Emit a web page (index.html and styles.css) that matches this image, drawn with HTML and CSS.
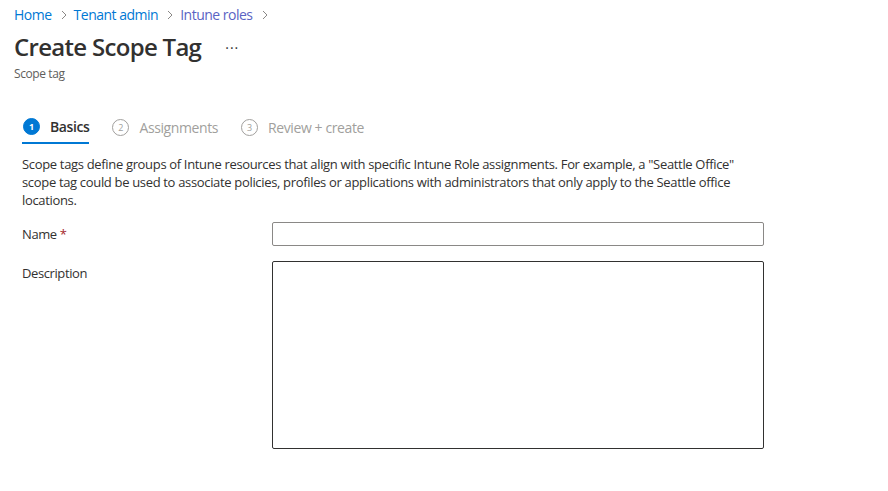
FILE: index.html
```html
<!DOCTYPE html>
<html lang="en">
<head>
    <meta charset="UTF-8">
    <meta name="viewport" content="width=device-width, initial-scale=1.0">
    <title>Create Scope Tag</title>
    <link rel="stylesheet" href="styles.css">
</head>
<body>
    <header class="page-header">
        <nav class="breadcrumb">
            <a href="#" class="crumb">Home</a>
            <svg class="sep" width="6" height="10" viewBox="0 0 6 10"><path d="M1 1l4 4-4 4" fill="none" stroke="#8a8886" stroke-width="1"/></svg>
            <a href="#" class="crumb">Tenant admin</a>
            <svg class="sep" width="6" height="10" viewBox="0 0 6 10"><path d="M1 1l4 4-4 4" fill="none" stroke="#8a8886" stroke-width="1"/></svg>
            <a href="#" class="crumb visited">Intune roles</a>
            <svg class="sep" width="6" height="10" viewBox="0 0 6 10"><path d="M1 1l4 4-4 4" fill="none" stroke="#8a8886" stroke-width="1"/></svg>
        </nav>
        <div class="title-row">
            <h1>Create Scope Tag</h1>
            <span class="more">&middot;&middot;&middot;</span>
        </div>
        <p class="subtitle">Scope tag</p>
    </header>

    <main class="content">
        <ul class="steps">
            <li class="step active"><span class="num">1</span>Basics</li>
            <li class="step"><span class="num">2</span>Assignments</li>
            <li class="step"><span class="num">3</span>Review + create</li>
        </ul>

        <p class="intro">Scope tags define groups of Intune resources that align with specific Intune Role assignments. For example, a "Seattle Office" scope tag could be used to associate policies, profiles or applications with administrators that only apply to the Seattle office locations.</p>

        <form class="form">
            <div class="field">
                <label for="name">Name <span class="req">*</span></label>
                <input type="text" id="name" class="input">
            </div>
            <div class="field">
                <label for="desc">Description</label>
                <textarea id="desc" class="textarea"></textarea>
            </div>
        </form>
    </main>
</body>
</html>
```

FILE: styles.css
```css
body {
    font-family: "Open Sans", "Noto Sans", sans-serif;
    margin: 0;
    background: #fff;
    color: #323130;
    letter-spacing: -0.4px;
}
a {
    text-decoration: none;
}
.page-header {
    padding: 5px 14px 0;
}
.breadcrumb {
    display: flex;
    align-items: center;
    font-size: 14px;
    line-height: 20px;
}
.crumb {
    color: #0078d4;
    letter-spacing: -0.5px;
}
.crumb.visited {
    color: #5a63c4;
}
.sep {
    margin: 0 7px 0 9px;
}
.title-row {
    display: flex;
    align-items: center;
    margin-top: 6px;
}
h1 {
    margin: 0;
    font-size: 24px;
    font-weight: 600;
    line-height: 32px;
    letter-spacing: -0.7px;
}
.more {
    margin-left: 24px;
    font-size: 14px;
    color: #323130;
    letter-spacing: 1px;
}
.subtitle {
    margin: 2px 0 0;
    font-size: 12px;
    color: #605e5c;
}
.content {
    padding: 35px 22px 0;
}
.steps {
    display: flex;
    list-style: none;
    margin: 0;
    padding: 0;
    gap: 22px;
    font-size: 14px;
}
.step {
    display: flex;
    align-items: center;
    color: #a19f9d;
    padding-bottom: 6px;
}
.step.active {
    color: #323130;
    font-weight: 600;
    border-bottom: 2px solid #0078d4;
}
.num {
    width: 15px;
    height: 15px;
    border: 1px solid #a19f9d;
    border-radius: 50%;
    font-size: 9px;
    font-weight: 400;
    letter-spacing: 0;
    display: flex;
    align-items: center;
    justify-content: center;
    margin: 0 10px 0 1px;
}
.step.active .num {
    background: #0078d4;
    border-color: #0078d4;
    color: #fff;
    font-weight: 700;
}
.intro {
    margin: 11px 0 0;
    max-width: 736px;
    font-size: 13px;
    line-height: 18px;
    letter-spacing: -0.33px;
}
.field {
    display: flex;
    align-items: flex-start;
}
.field label {
    width: 250px;
    font-size: 13px;
    line-height: 20px;
    padding-top: 2px;
}
.req {
    color: #a4262c;
}
.input {
    box-sizing: border-box;
    width: 492px;
    height: 24px;
    margin: 0;
    border: 1px solid #8a8886;
    border-radius: 2px;
}
.textarea {
    box-sizing: border-box;
    width: 492px;
    height: 188px;
    margin: 0;
    border: 1px solid #323130;
    border-radius: 2px;
    resize: none;
}
.form {
    margin-top: 13px;
    display: flex;
    flex-direction: column;
    gap: 15px;
}
```
